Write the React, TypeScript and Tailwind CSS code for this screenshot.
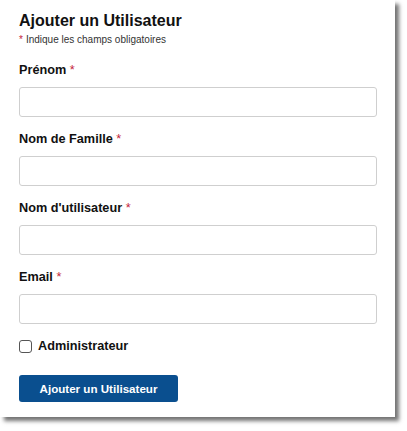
export default function App() {
  const fields = ["Prénom", "Nom de Famille", "Nom d'utilisateur", "Email"];

  return (
    <div className="w-[407px] h-[431px] bg-white" style={{ fontFamily: '"Liberation Sans", Arial, sans-serif' }}>
      <div className="w-[395px] h-[417px] bg-white shadow-[4px_4px_4px_rgba(0,0,0,0.55)] pl-[19px] pr-[18px] pt-[11px]">
        {/* Header */}
        <h1 className="text-[16px] leading-[20px] font-bold text-[#111]">Ajouter un Utilisateur</h1>
        <p className="mt-[2px] text-[10px] leading-[13px] text-[#333]">
          <span className="text-[#c41e3a] mr-[3px]">*</span>
          Indique les champs obligatoires
        </p>

        {/* Fields */}
        <div className="mt-[16px] flex flex-col gap-[14px]">
          {fields.map((f) => (
            <div key={f} className="flex flex-col">
              <label className="text-[12.7px] leading-[16px] font-bold text-[#111] mb-[9px]">
                {f} <span className="text-[#c41e3a] font-normal">*</span>
              </label>
              <input
                type="text"
                className="h-[30px] w-full border border-[#cfcfcf] rounded-[3px] bg-white px-2 outline-none"
              />
            </div>
          ))}
        </div>

        {/* Admin checkbox */}
        <label className="mt-[14px] h-[16px] flex items-center gap-[6px]">
          <span className="w-[13px] h-[13px] border border-[#555] rounded-[3px] bg-white" />
          <span className="text-[12.7px] leading-[16px] font-bold text-[#111]">Administrateur</span>
        </label>

        <button className="mt-[21px] w-[159px] h-[27px] rounded-[3px] bg-[#0a4f8f] text-white text-[11.6px] font-bold">
          Ajouter un Utilisateur
        </button>
      </div>
    </div>
  );
}
